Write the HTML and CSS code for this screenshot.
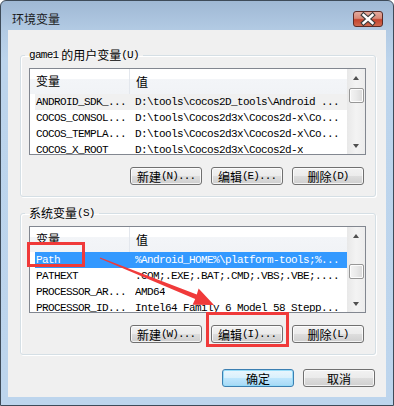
FILE: index.html
```html
<!DOCTYPE html>
<html lang="zh-CN">
<head>
    <meta charset="UTF-8">
    <title>环境变量</title>
    <link rel="stylesheet" href="styles.css">
</head>
<body>

    <div class="window">
        <div class="titlebar">
            <span class="title">环境变量</span>
            <span class="close">
                <svg width="30" height="16" viewBox="0 0 30 16">
                    <path d="M10.5 4 L19.5 12 M19.5 4 L10.5 12" stroke="#3b3b3b" stroke-width="4.6" stroke-linecap="square"/>
                    <path d="M10.5 4 L19.5 12 M19.5 4 L10.5 12" stroke="#ffffff" stroke-width="2.4" stroke-linecap="square"/>
                </svg>
            </span>
        </div>

        <div class="client">
            <!-- user variables -->
            <fieldset class="group">
                <legend><span class="en">game1</span> 的用户变量<span class="en">(U)</span></legend>
                <div class="list">
                    <div class="list-body">
                        <div class="list-head">
                            <span class="head-name">变量</span>
                            <span class="head-value">值</span>
                        </div>
                        <div class="row row-inactive">
                            <span class="cell-name">ANDROID_SDK_...</span>
                            <span class="cell-value">D:\tools\cocos2D_tools\Android ...</span>
                        </div>
                        <div class="row">
                            <span class="cell-name">COCOS_CONSOL...</span>
                            <span class="cell-value">D:\tools\Cocos2d3x\Cocos2d-x\Co...</span>
                        </div>
                        <div class="row">
                            <span class="cell-name">COCOS_TEMPLA...</span>
                            <span class="cell-value">D:\tools\Cocos2d3x\Cocos2d-x\Co...</span>
                        </div>
                        <div class="row">
                            <span class="cell-name">COCOS_X_ROOT</span>
                            <span class="cell-value">D:\tools\Cocos2d3x\Cocos2d-x</span>
                        </div>
                    </div>
                    <div class="scrollbar">
                        <span class="sb-btn"><span class="arrow-up"></span></span>
                        <span class="thumb thumb-top"></span>
                        <span class="sb-track"></span>
                        <span class="sb-btn"><span class="arrow-down"></span></span>
                    </div>
                </div>
                <div class="actions">
                    <button class="btn">新建<span class="en">(N)...</span></button>
                    <button class="btn">编辑<span class="en">(E)...</span></button>
                    <button class="btn">删除<span class="en">(D)</span></button>
                </div>
            </fieldset>

            <!-- system variables -->
            <fieldset class="group group-system">
                <legend>系统变量<span class="en">(S)</span></legend>
                <div class="list">
                    <div class="list-body">
                        <div class="list-head">
                            <span class="head-name">变量</span>
                            <span class="head-value">值</span>
                        </div>
                        <div class="row row-selected">
                            <span class="cell-name">Path</span>
                            <span class="cell-value">%Android_HOME%\platform-tools;%...</span>
                        </div>
                        <div class="row">
                            <span class="cell-name">PATHEXT</span>
                            <span class="cell-value">.COM;.EXE;.BAT;.CMD;.VBS;.VBE;....</span>
                        </div>
                        <div class="row">
                            <span class="cell-name">PROCESSOR_AR...</span>
                            <span class="cell-value">AMD64</span>
                        </div>
                        <div class="row">
                            <span class="cell-name">PROCESSOR_ID...</span>
                            <span class="cell-value">Intel64 Family 6 Model 58 Stepp...</span>
                        </div>
                    </div>
                    <div class="scrollbar">
                        <span class="sb-btn"><span class="arrow-up"></span></span>
                        <span class="thumb thumb-mid"></span>
                        <span class="sb-track"></span>
                        <span class="sb-btn"><span class="arrow-down"></span></span>
                    </div>
                </div>
                <div class="actions">
                    <button class="btn">新建<span class="en">(W)...</span></button>
                    <button class="btn">编辑<span class="en">(I)...</span></button>
                    <button class="btn">删除<span class="en">(L)</span></button>
                </div>
            </fieldset>

            <div class="footer">
                <button class="btn btn-default">确定</button>
                <button class="btn">取消</button>
            </div>
        </div>

        <!-- red marks drawn over the screenshot -->
        <svg class="marks" width="394" height="406" viewBox="0 0 394 406">
            <rect x="28.5" y="243.5" width="55" height="22" fill="none" stroke="#f03a3a" stroke-width="3"/>
            <rect x="207.5" y="313.5" width="80" height="32" fill="none" stroke="#f03a3a" stroke-width="3"/>
            <polygon points="100.2,257.6 196.8,294.6 198.6,288.6 214,305 192.6,304.8 195.2,298.9 99.8,258.4" fill="#f03a3a"/>
        </svg>
    </div>

</body>
</html>
```

FILE: styles.css
```css
body {
    margin: 0;
    font-family: "Noto Sans CJK SC", "Liberation Sans", sans-serif;
    font-size: 12px;
    color: #000;
}
.window {
    position: relative;
    width: 394px;
    height: 406px;
    box-sizing: border-box;
    border: 1px solid #3e4b59;
    border-radius: 6px 6px 0 0;
    background: linear-gradient(#9fb8d4 0, #b3cbe4 30px, #bcd4ec 60px, #bdd5ed 100%);
    padding: 0 7px 8px 7px;
    display: flex;
    flex-direction: column;
}
.titlebar {
    height: 29px;
    flex-shrink: 0;
    box-sizing: border-box;
    padding: 6px 3px 0 4px;
    display: flex;
    align-items: center;
    justify-content: space-between;
}
.title {
    line-height: 14px;
    color: #1a1a1a;
}
.close {
    width: 30px;
    height: 16px;
    box-sizing: border-box;
    border: 1px solid #5b2b26;
    border-radius: 3px;
    background: linear-gradient(#e2aa9e 0, #d88a78 45%, #c4442e 55%, #cf6a50 100%);
    display: flex;
}
.close svg {
    margin: -1px;
}
.client {
    flex: 1;
    min-height: 0;
    background: #f0f0f0;
    padding-top: 18px;
}
.en {
    font-family: "Liberation Mono", monospace;
    font-size: 11px;
    letter-spacing: -0.7px;
}
.group {
    margin: 0 10px 0 12px;
    padding: 6px 9px 11px 8px;
    border: 1px solid #d5dfe5;
    border-radius: 3px;
    box-shadow: inset 1px 1px 0 #fff, 1px 1px 0 #fff;
}
.group legend {
    margin-left: -4px;
    padding: 0 4px;
    height: 14px;
    line-height: 14px;
    white-space: nowrap;
}
.group legend .en {
    vertical-align: top;
}
.group-system {
    margin-top: 9px;
}
.list {
    height: 87px;
    box-sizing: border-box;
    border: 1px solid #828790;
    background: #fff;
    display: flex;
    overflow: hidden;
}
.list-body {
    flex: 1;
    overflow: hidden;
}
.list-head {
    height: 25px;
    display: flex;
    align-items: center;
    background: linear-gradient(#ffffff 0, #ffffff 38%, #f3f5f8 38%, #f1f3f6 100%);
    line-height: 14px;
}
.head-name {
    width: 93px;
    height: 25px;
    line-height: 24px;
    padding-left: 6px;
    border-right: 1px solid #e3e7ed;
}
.head-value {
    line-height: 24px;
    padding-left: 6px;
}
.row {
    height: 16px;
    margin-left: 5px;
    display: flex;
    align-items: center;
    white-space: nowrap;
    font-family: "Liberation Mono", monospace;
    font-size: 11px;
    letter-spacing: -0.6px;
}
.cell-name {
    width: 99px;
    padding-left: 1px;
    overflow: hidden;
}
.cell-value {
    overflow: hidden;
}
.row-inactive {
    background: #f0f0f0;
}
.row-selected {
    background: #3399ff;
    color: #fff;
}
.scrollbar {
    width: 18px;
    flex-shrink: 0;
    display: flex;
    flex-direction: column;
    align-items: center;
    background: linear-gradient(90deg, #e8e8e8, #f3f3f3 50%, #ececec);
}
.sb-btn {
    height: 17px;
    width: 100%;
    display: flex;
    align-items: center;
    justify-content: center;
}
.sb-track {
    flex: 1;
}
.arrow-up,
.arrow-down {
    width: 0;
    height: 0;
    border-left: 3.5px solid transparent;
    border-right: 3.5px solid transparent;
}
.arrow-up {
    border-bottom: 4px solid #4f4f4f;
}
.arrow-down {
    border-top: 4px solid #4f4f4f;
}
.thumb {
    width: 15px;
    height: 15px;
    flex-shrink: 0;
    box-sizing: border-box;
    border: 1px solid #979797;
    border-radius: 2px;
    background: linear-gradient(90deg, #f4f4f4, #e9e9e9 50%, #d9d9d9);
    box-shadow: inset 0 0 0 1px #fcfcfc;
}
.thumb-top {
    margin-top: 2px;
}
.thumb-mid {
    margin-top: 20px;
}
.actions {
    margin-top: 12px;
    padding-right: 2px;
    display: flex;
    justify-content: flex-end;
    gap: 9px;
}
.btn {
    width: 72px;
    height: 18px;
    box-sizing: border-box;
    padding: 0;
    border: 1px solid #707070;
    border-radius: 3px;
    background: linear-gradient(#f2f2f2 0, #ebebeb 50%, #dddddd 51%, #cfcfcf 100%);
    box-shadow: inset 0 0 0 1px rgba(255, 255, 255, 0.75);
    font-family: "Noto Sans CJK SC", "Liberation Sans", sans-serif;
    font-size: 12px;
    line-height: 15px;
    color: #000;
    display: flex;
    align-items: center;
    justify-content: center;
}
.btn .en {
    letter-spacing: -0.9px;
}
.btn-default {
    border-color: #3c7fb1;
    background: linear-gradient(#eaf6fd 0, #d9f0fc 50%, #bee6fd 51%, #a7d9f5 100%);
    box-shadow: inset 0 0 0 1px #98dcf8;
}
.footer {
    margin-top: 14px;
    padding-right: 11px;
    display: flex;
    justify-content: flex-end;
    gap: 9px;
}
.marks {
    position: absolute;
    top: -1px;
    left: -1px;
    pointer-events: none;
}
```
